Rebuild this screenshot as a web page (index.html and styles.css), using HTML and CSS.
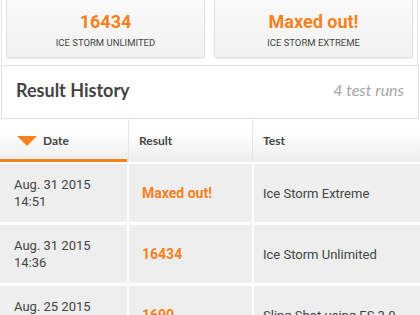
FILE: index.html
```html
<!DOCTYPE html>
<html>
<head>
  <meta charset="utf-8" />
  <title>Result History</title>
  <link rel="stylesheet" href="styles.css">
</head>
<body>
  <div class="summary">
    <div class="score-card">
      <div class="score">16434</div>
      <div class="score-name">ICE STORM UNLIMITED</div>
    </div>
    <div class="score-card">
      <div class="score">Maxed out!</div>
      <div class="score-name">ICE STORM EXTREME</div>
    </div>
  </div>

  <div class="history-head">
    <h2>Result History</h2>
    <span class="runs">4 test runs</span>
  </div>

  <div class="table-head">
    <div class="th sorted"><span class="arrow"></span>Date</div>
    <div class="th">Result</div>
    <div class="th">Test</div>
  </div>

  <div class="rows">
    <div class="row">
      <div class="td date">Aug. 31 2015<br>14:51</div>
      <div class="td result">Maxed out!</div>
      <div class="td test">Ice Storm Extreme</div>
    </div>
    <div class="row">
      <div class="td date">Aug. 31 2015<br>14:36</div>
      <div class="td result">16434</div>
      <div class="td test">Ice Storm Unlimited</div>
    </div>
    <div class="row">
      <div class="td date">Aug. 25 2015<br>13:02</div>
      <div class="td result">1690</div>
      <div class="td test">Sling Shot using ES 3.0</div>
    </div>
  </div>
</body>
</html>
```

FILE: styles.css
```css
html, body {
  margin: 0;
  padding: 0;
  background: #fff;
  overflow: hidden;
}
body {
  width: 420px;
  font-family: Roboto, "Liberation Sans", sans-serif;
  color: #444;
}

/* top score cards, page is scrolled a little */
.summary {
  box-sizing: border-box;
  width: 417px;
  margin: -11px 0 0 1px;
  padding: 6px 4px 7px 4px;
  border-left: 1px solid #e2e2e2;
  border-right: 1px solid #e2e2e2;
  display: grid;
  grid-template-columns: 1fr 1fr;
  column-gap: 9px;
}
.score-card {
  padding: 14px 0 7px;
  border: 1px solid #dedede;
  border-radius: 3px;
  background: linear-gradient(#fafafa, #f2f2f2);
  box-shadow: 0 1px 1px rgba(0, 0, 0, 0.08);
  text-align: center;
}
.score {
  font-size: 18px;
  font-weight: bold;
  line-height: 24px;
  color: #f7801e;
}
.score-name {
  margin-top: 2px;
  font-size: 9.5px;
  line-height: 14px;
  color: #444;
}

/* result history title */
.history-head {
  box-sizing: border-box;
  height: 54px;
  margin: 0 1px;
  padding: 0 14px 5px;
  border: 1px solid #dedede;
  display: flex;
  align-items: center;
  justify-content: space-between;
  font-family: Lato, "Liberation Sans", sans-serif;
}
.history-head h2 {
  margin: 0;
  font-size: 18px;
  font-weight: bold;
  color: #444;
}
.runs {
  font-size: 16px;
  font-style: italic;
  color: #a6a6a6;
}

/* table */
.table-head, .row {
  display: grid;
  grid-template-columns: 127px 123px 1fr;
}
.table-head {
  height: 43px;
  background: linear-gradient(#fff 30%, #ededed);
  font-family: Lato, "Liberation Sans", sans-serif;
  font-size: 12px;
  font-weight: bold;
  color: #444;
}
.th {
  display: flex;
  align-items: center;
  padding-left: 10px;
  border-left: 1px solid #e6e6e6;
}
.th.sorted {
  border-left: none;
  padding-left: 17px;
  border-bottom: 3px solid #f7801e;
  padding-top: 3px;
  column-gap: 6px;
}
.th:nth-child(2) { margin-left: 1px; }
.th:nth-child(3) { margin-left: 2px; }
.arrow {
  width: 0;
  height: 0;
  border-left: 10.5px solid transparent;
  border-right: 10.5px solid transparent;
  border-top: 10px solid #f7801e;
}

.rows {
  padding-top: 2px;
  display: grid;
  row-gap: 3px;
}
.row {
  column-gap: 2px;
  height: 58px;
}
.td {
  background: #eeeeee;
  display: flex;
  align-items: center;
  font-size: 13px;
  color: #444;
}
.date {
  padding-left: 14px;
  line-height: 17px;
}
.result {
  padding-left: 13px;
  font-size: 14px;
  font-weight: bold;
  color: #f7801e;
}
.test {
  padding-left: 9px;
}
```
